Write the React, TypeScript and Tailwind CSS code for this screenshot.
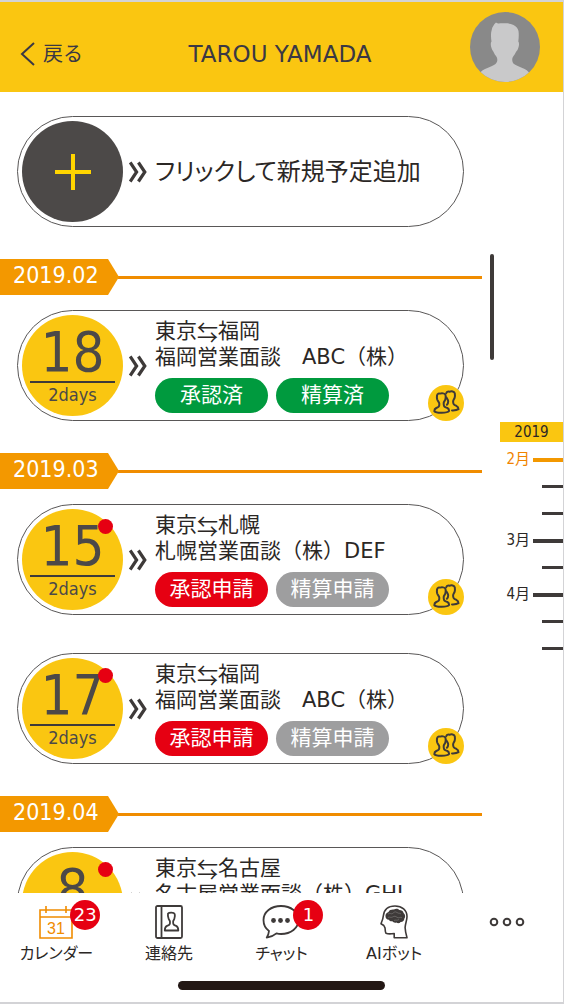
import type { ReactNode } from "react";

type Status = { label: string; tone: "green" | "red" | "gray" };
type Trip = {
  day: string;
  length: string;
  from: string;
  to: string;
  title: string;
  unread?: boolean;
  statuses: Status[];
};
type Month = { label: string; trips: Trip[] };

const done: Status[] = [
  { label: "承認済", tone: "green" },
  { label: "精算済", tone: "green" },
];
const pending: Status[] = [
  { label: "承認申請", tone: "red" },
  { label: "精算申請", tone: "gray" },
];

const months: Month[] = [
  {
    label: "2019.02",
    trips: [{ day: "18", length: "2days", from: "東京", to: "福岡", title: "福岡営業面談　ABC（株）", statuses: done }],
  },
  {
    label: "2019.03",
    trips: [
      { day: "15", length: "2days", from: "東京", to: "札幌", title: "札幌営業面談（株）DEF", unread: true, statuses: pending },
      { day: "17", length: "2days", from: "東京", to: "福岡", title: "福岡営業面談　ABC（株）", unread: true, statuses: pending },
    ],
  },
  {
    label: "2019.04",
    trips: [
      { day: "8", length: "2days", from: "東京", to: "名古屋", title: "名古屋営業面談（株）GHI", unread: true, statuses: pending },
    ],
  },
];

const tones = {
  green: "bg-[#009a3e]",
  red: "bg-[#e60012]",
  gray: "bg-[#9e9e9f]",
};

function DoubleChevron() {
  return (
    <svg className="h-[22px] w-[18px] shrink-0" viewBox="0 0 18 22" fill="none" stroke="#3e3a39" strokeWidth="3.200" aria-hidden="true">
      <path d="M1.200 1.500 7.600 11 1.200 20.500M9.400 1.500 15.800 11 9.400 20.500" />
    </svg>
  );
}

function PeopleIcon() {
  return (
    <svg className="size-full" viewBox="0 0 36 36" fill="none" stroke="#3e3a39" strokeWidth="2" strokeLinejoin="round" strokeLinecap="round" aria-hidden="true">
      <path d="M9 10.500C9.500 8.300 11 8.300 12 8.600c1.500-.5 5-.6 5.500 1.500.4 1.700.2 3-.1 4.200-.3 1.500-1.600 2.300-1.700 3.500-.3 4.500 1.200 4.200 3.700 5.200 1.200.6 1.700 1.700 1.700 3-1.700 2.300-13 2.500-14.800.2 0-1.600.7-2.600 2-3.200 2.200-.9 3.200-1.300 3-4.200-.1-1.800-1.500-2.500-2-4-.4-1.500-.5-3-.3-4.300z" />
      <path d="M18.200 8.300c.4-1.500 2-1.900 3.200-1.600 2-.7 5-.4 5.400 1.700.3 1.800.2 3.300-.2 4.500-.5 1.400-1.500 2-1.500 3.500 0 3.400 1.200 3.600 3.200 4.400 1.500.7 2.200 1.700 2.200 3.400-1.500 1-4 1.300-6.500 1.200M18.500 12.500c.5 1.600 1.700 2 1.700 3.700 0 1.500-.3 2.700-1.300 3.600" />
    </svg>
  );
}

function Pill({ children }: { children: ReactNode }) {
  return (
    <div className="relative ml-[17px] mr-[18px] flex h-[111px] items-center rounded-full border border-[#595757] pl-1">
      {children}
    </div>
  );
}

function TripCard({ trip }: { trip: Trip }) {
  return (
    <Pill>
      <div className="relative flex size-[101px] shrink-0 flex-col items-center rounded-full bg-[#fac611] pt-2 text-[#4c4948]">
        <span className="text-[56px] leading-[58px]">{trip.day}</span>
        <span className="h-[2px] w-[85px] bg-[#3e3a39]" />
        <span className="text-[18px] leading-6">{trip.length}</span>
        {trip.unread && <span className="absolute right-[10px] top-[10px] size-[15px] rounded-full bg-[#e60012]" />}
      </div>
      <div className="ml-[6px] flex">
        <DoubleChevron />
      </div>
      <div className="ml-2 whitespace-nowrap text-[21px] leading-[26px]">
        <p className="flex">
          {trip.from}
          <span className="[font-family:'Noto_Sans_CJK_JP',sans-serif]">⇆</span>
          {trip.to}
        </p>
        <p className="[font-family:'DejaVu_Sans','Noto_Sans_CJK_JP',sans-serif]">{trip.title}</p>
        <div className="mt-2 flex gap-2">
          {trip.statuses.map((s) => (
            <button key={s.label} type="button" className={`h-[35px] w-[113px] rounded-full leading-[35px] text-white ${tones[s.tone]}`}>
              {s.label}
            </button>
          ))}
        </div>
      </div>
      <button type="button" aria-label="同行者" className="absolute -bottom-px -right-px size-9 rounded-full bg-[#fac611]">
        <PeopleIcon />
      </button>
    </Pill>
  );
}

function MonthHeading({ label }: { label: string }) {
  return (
    <div className="flex items-center">
      <h2 className="flex h-9 w-[119px] items-center bg-[#f39800] pb-[3px] pl-[13px] text-[23px] text-white [clip-path:polygon(0_0,108px_0,100%_50%,108px_100%,0_100%)]">
        {label}
      </h2>
      <span className="-ml-px h-[3px] flex-1 bg-[#f08c00]" />
    </div>
  );
}

const ticks: { label?: string; active?: boolean }[] = [
  { label: "2月", active: true },
  {},
  {},
  { label: "3月" },
  {},
  { label: "4月" },
  {},
  {},
];

function Timeline() {
  return (
    <aside className="mt-[330px] w-[63px] shrink-0">
      <p className="h-5 bg-[#fac611] text-center text-[15px] leading-5">2019</p>
      <ul className="mt-1">
        {ticks.map((t, i) => (
          <li key={i} className="flex h-[27px] items-center justify-end gap-[3px]">
            {t.label && <a href="#month" className={`text-[15px] ${t.active ? "text-[#f08300]" : ""}`}>{t.label}</a>}
            <span className={t.label ? (t.active ? "h-1 w-[30px] bg-[#f39800]" : "h-1 w-[30px] bg-[#3e3a39]") : "h-[3px] w-[21px] bg-[#3e3a39]"} />
          </li>
        ))}
      </ul>
    </aside>
  );
}

function CalendarIcon() {
  return (
    <svg className="h-[34px] w-[34px]" viewBox="0 0 34 34" fill="none" stroke="#f08c00" strokeWidth="1.600" aria-hidden="true">
      <path d="M1 5h32v28H1zM1 12h32M7 1v7M27 1v7" />
      <text x="17" y="28.500" textAnchor="middle" fontSize="16" fontFamily="Liberation Sans, sans-serif" fill="#f08c00" stroke="none">31</text>
    </svg>
  );
}

function ContactsIcon() {
  return (
    <svg className="h-[34px] w-[28px]" viewBox="0 0 28 34" fill="none" stroke="#3e3a39" strokeWidth="1.800" strokeLinejoin="round" aria-hidden="true">
      <rect x="1" y="1" width="26" height="32" rx="1.500" />
      <path d="M6.500 1v32" />
      <path d="M13 8.500c1-1.200 6-1.400 6.700.5.400 1.500.2 3.500-.4 5-.4 1-1.100 1.500-1.200 2.700-.1 3 .8 3.400 3 4.200 1.700.7 2.200 2 2.200 4.600H9.800c0-2.600.6-3.900 2.200-4.600 2.200-.8 3.200-1.200 3-4.200-.1-1.200-.9-1.700-1.300-2.700-.7-1.700-1-3.900-.7-5.500z" />
    </svg>
  );
}

function ChatIcon() {
  return (
    <svg className="h-[34px] w-[38px]" viewBox="0 0 38 34" fill="none" stroke="#3e3a39" strokeWidth="1.800" strokeLinejoin="round" aria-hidden="true">
      <path d="M19 1C9 1 1.500 7 1.500 15c0 4.800 2 8.500 5.500 11-.2 2.500-1 4.500-2.300 6.600 4-.6 7.300-2 9.800-4.200 1.500.4 3 .6 4.500.6 10 0 17.500-6 17.500-14S29 1 19 1z" />
      <g fill="#3e3a39" stroke="none">
        <circle cx="11.500" cy="15.500" r="2.400" />
        <circle cx="18.500" cy="15.500" r="2.400" />
        <circle cx="25.500" cy="15.500" r="2.400" />
      </g>
    </svg>
  );
}

function BrainIcon() {
  return (
    <svg className="h-[34px] w-[30px]" viewBox="0 0 30 34" fill="none" stroke="#3e3a39" strokeWidth="1.600" strokeLinejoin="round" aria-hidden="true">
      <path d="M28 32.800H15.200v-4.300c-3 .5-6 .7-8.200-.2-1-1.300-.6-3.500-1-5.500L4.800 20.500 2 18.800C3.200 16 4.200 13.500 4.300 11 5 4.500 9.500 1 16 1c7 0 12 4 12 10.500 0 4-1.700 7-1.900 11 .1 3.500 1 7 1.900 10.300z" />
      <path fill="#3e3a39" stroke="none" d="M6.500 11.500c-.4-2.300 1-4 3-4.600C10.300 4.800 13 4.200 15 4.500c1.800-1.200 4.300-.7 5.300.5 2.300 0 4 1.300 4.300 3 1.800 1.500 2 4 .8 5.500-.2 2.300-1.800 3.700-3.800 3.500-1 1.500-3 1.500-4.200.4-1.500.5-3 .2-3.900-1.200-1.500.4-3-.2-3.500-1.500-1.800.2-3.500-1.200-3.500-3.200z" />
      <path stroke="#8c8a89" strokeWidth="0.500" d="M9 9c2-1.500 3 .5 4.500-.5S16 6 18 7.500s2.500 0 4 1.500M9 12.500c2-1 2.500.5 4.500-.5s3-1 4.500.3 3.500-.8 5 .5M15 15.500c1.500-1 3 .5 5-1" />
    </svg>
  );
}

function NavItem({ label, badge, children }: { label: string; badge?: string; children: ReactNode }) {
  return (
    <a href="#nav" className="flex flex-col items-center whitespace-nowrap [font-family:'DejaVu_Sans','Noto_Sans_CJK_JP',sans-serif]">
      <span className="relative flex h-[34px]">
        {children}
        {badge && (
          <span className="absolute -top-[5px] left-[31px] flex size-[30px] items-center justify-center rounded-full bg-[#e60012] text-[18px] leading-5 text-white">
            {badge}
          </span>
        )}
      </span>
      <span className="mt-[3px] text-[16px] leading-6 [font-feature-settings:'palt']">{label}</span>
    </a>
  );
}

export default function App() {
  return (
    <div className="h-screen bg-white pb-[3px] text-[#2b2725] [font-family:'DejaVu_Sans_Condensed','Noto_Sans_CJK_JP',sans-serif]">
      <div className="flex h-full flex-col border-b-2 border-r border-t-2 border-[#d3d3d6]">
        <header className="grid h-[90px] shrink-0 grid-cols-[1fr_auto_1fr] items-center bg-[#fac611] pl-5 pr-[23px] text-[#3a3844]">
          <button type="button" className="flex items-center gap-2 justify-self-start pt-[14px] text-[20px] leading-7">
            <svg className="h-6 w-[15px]" viewBox="0 0 15 24" fill="none" stroke="currentColor" strokeWidth="2" aria-hidden="true">
              <path d="M14 1 2 12l12 11" />
            </svg>
            戻る
          </button>
          <h1 className="pt-[14px] text-[23px] leading-8 [font-family:'DejaVu_Sans',sans-serif]">TAROU YAMADA</h1>
          <svg className="size-[70px] justify-self-end" viewBox="0 0 70 70" role="img" aria-label="プロフィール">
            <clipPath id="avatar">
              <circle cx="35" cy="35" r="35" />
            </clipPath>
            <circle cx="35" cy="35" r="35" fill="#898989" />
            <path
              clipPath="url(#avatar)"
              fill="#c9c9ca"
              d="M26 10.500c2 1.500 3.500.8 6 .8 4.500 0 8-.3 11.500 1.700 2 1.200 4.500 3 5 6 .5 3.500.2 7-.2 10.500 1.400 1.500.6 6-.8 8.500-1.600 1.500-2.200 4-4 6-2 2.600-1.500 6.500.5 8 4 3 13 4 16 10V72H9V62c4-6 13-7 16.500-10 2.200-2 2.500-5.500.5-8-1.800-2-2.400-4.500-3.700-6-1.400-2.500-2.200-7-.8-8.500-.5-3.500-1-8 .2-11.500.4-3 2.300-5.500 4.300-7.500z"
            />
          </svg>
        </header>

        <main className="flex min-h-0 flex-1 overflow-y-auto [scrollbar-width:none]">
          <div className="min-w-0 flex-1 pt-6">
            <Pill>
              <button type="button" aria-label="新規予定追加" className="flex size-[101px] shrink-0 items-center justify-center rounded-full bg-[#4c4948]">
                <svg className="size-9" viewBox="0 0 36 36" stroke="#ffd500" strokeWidth="4" aria-hidden="true">
                  <path d="M18 0v36M0 18h36" />
                </svg>
              </button>
              <div className="ml-[6px] flex">
                <DoubleChevron />
              </div>
              <p className="ml-2 whitespace-nowrap text-[24px] leading-8 [font-feature-settings:'palt']">フリックして新規予定追加</p>
            </Pill>
            {months.map((m) => (
              <section key={m.label} className="mt-8">
                <MonthHeading label={m.label} />
                <div className="mt-[15px] flex flex-col gap-[38px]">
                  {m.trips.map((t) => (
                    <TripCard key={t.day} trip={t} />
                  ))}
                </div>
              </section>
            ))}
          </div>
          <div className="ml-2 mr-[6px] mt-[162px] h-[106px] w-1 shrink-0 rounded-full bg-[#3e3a39]" />
          <Timeline />
        </main>

        <footer className="shrink-0 bg-white pt-3">
          <nav className="grid grid-cols-5">
            <NavItem label="カレンダー" badge="23"><CalendarIcon /></NavItem>
            <NavItem label="連絡先"><ContactsIcon /></NavItem>
            <NavItem label="チャット" badge="1"><ChatIcon /></NavItem>
            <NavItem label="AIボット"><BrainIcon /></NavItem>
            <button type="button" aria-label="その他" className="flex h-[34px] items-center justify-center">
              <svg className="h-[10px] w-9" viewBox="0 0 36 10" fill="none" stroke="#3e3a39" strokeWidth="2" aria-hidden="true">
                <circle cx="5" cy="5" r="3.300" />
                <circle cx="18" cy="5" r="3.300" />
                <circle cx="31" cy="5" r="3.300" />
              </svg>
            </button>
          </nav>
          <div className="mx-auto mb-3 mt-[15px] h-[9px] w-[207px] rounded-full bg-[#231815]" />
        </footer>
      </div>
    </div>
  );
}
